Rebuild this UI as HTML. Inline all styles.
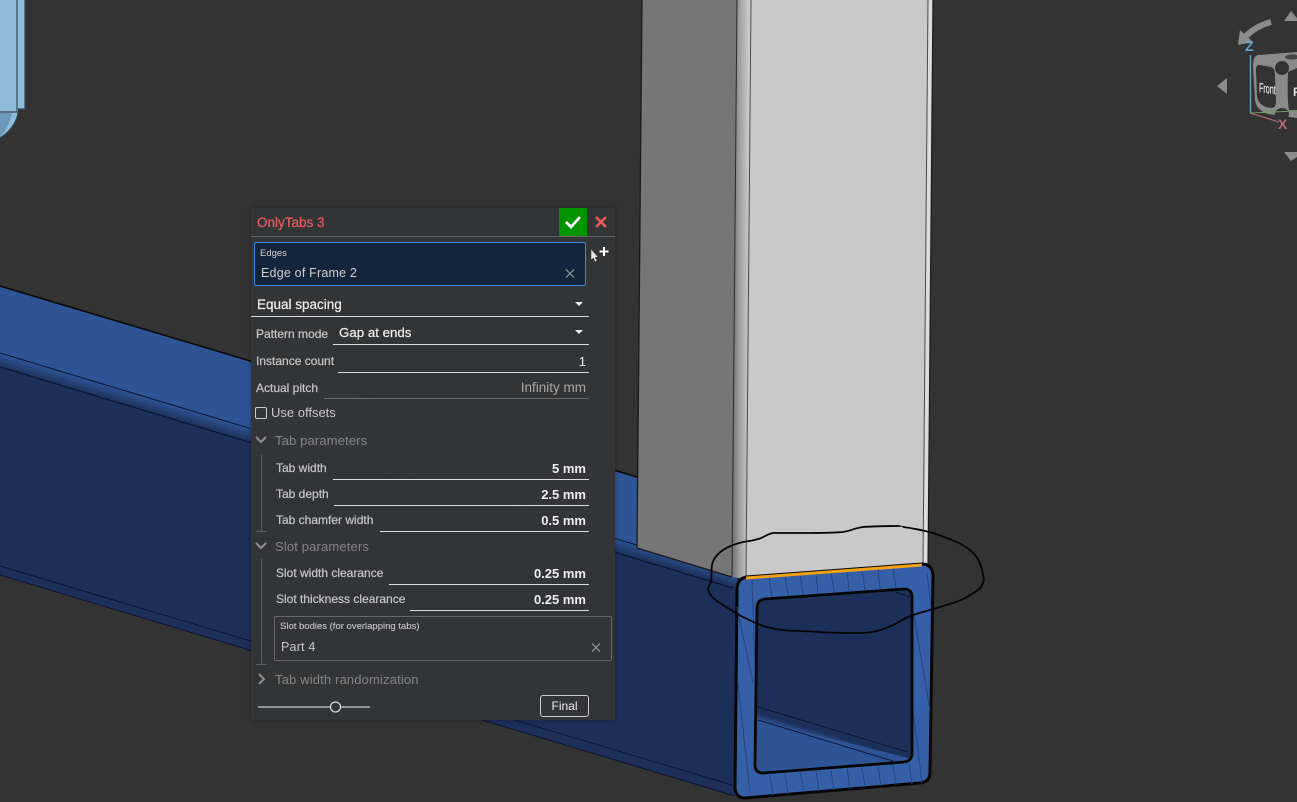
<!DOCTYPE html>
<html><head><meta charset="utf-8"><style>
html,body{margin:0;padding:0;width:1297px;height:802px;overflow:hidden;background:#333}
body{position:relative;font-family:"Liberation Sans",sans-serif;color:#ddd}
svg{position:absolute;left:0;top:0}
#p{position:absolute;left:251px;top:208px;width:364px;height:512px;background:rgba(51,52,54,.975);box-shadow:0 0 5px rgba(0,0,0,.3)}
.t{position:absolute;white-space:nowrap;font-size:12px;line-height:14px;color:#c8c8c8;transform:translateY(calc(-50% + 1px));-webkit-text-stroke:.2px #c8c8c8}
.v{position:absolute;white-space:nowrap;font-size:13px;line-height:14px;color:#eee;transform:translateY(calc(-50% + 1px));text-align:right}
.h{position:absolute;white-space:nowrap;font-size:13px;line-height:14px;color:#858585;transform:translateY(calc(-50% + 1px));letter-spacing:.15px}
.u{position:absolute;height:1px;background:#ddd}
</style></head><body>
<svg width="1297" height="802" viewBox="0 0 1297 802">
<defs>
<linearGradient id="band" gradientUnits="userSpaceOnUse" x1="100" y1="383.4" x2="96.1" y2="396.4"><stop offset="0" stop-color="#2f5496"/><stop offset="1" stop-color="#1c2f59"/></linearGradient>
<linearGradient id="rnd" x1="0" x2="1" y1="0" y2="0"><stop offset="0" stop-color="#6e6e6e"/><stop offset=".4" stop-color="#a0a0a0"/><stop offset="1" stop-color="#d4d4d4"/></linearGradient>
<linearGradient id="inb" gradientUnits="userSpaceOnUse" x1="838" y1="731" x2="834.4" y2="743"><stop offset="0" stop-color="#1c2f59"/><stop offset=".45" stop-color="#1c2f59"/><stop offset="1" stop-color="#2f5496"/></linearGradient>
</defs>
<!-- light blue part -->
<path d="M0 0H25V109H18C18 122 8 132 0 138Z" fill="#8fbcd8"/>
<path d="M17 0V112H0M25 0V109H18M18 112C17 124 8 133 0 138" fill="none" stroke="#33495a" stroke-width="1.2"/>
<path d="M0 113H12C9 125 5 132 0 137Z" fill="#6b9ab8"/>
<!-- beam -->
<path d="M0 286L740 509V797L0 575Z" fill="#1c2f59"/>
<path d="M0 286L737 508V577L0 353Z" fill="#2f5496"/>
<path d="M0 353L737 577V589L0 367Z" fill="url(#band)"/>
<path d="M0 353L640 546" stroke="#0d1530" stroke-width="1" fill="none"/>
<path d="M0 367L733 588" stroke="#0d1530" stroke-width="1.2" fill="none"/>
<path d="M0 286L637 477" stroke="#0a0a0a" stroke-width="1.6" fill="none"/>
<path d="M0 566L732 785" stroke="#0d1530" stroke-width="1" fill="none"/>
<path d="M0 575L735 796" stroke="#0d1530" stroke-width="1" fill="none"/>
<!-- column -->
<path d="M642 0H737L732 577L637 548Z" fill="#767676"/>
<path d="M737 0H751L746 579L732 577Z" fill="url(#rnd)"/>
<path d="M751 0H928L923 566L746 579Z" fill="#c9c9c9"/>
<path d="M928 0H933L928 566L923 566Z" fill="#dcdcdc"/>
<path d="M642 0L637 548L732 577" fill="none" stroke="#1a1a1a" stroke-width="1.3"/>
<path d="M737 0L732 577" stroke="#2b2b2b" stroke-width="1" fill="none"/>
<path d="M751 0L746 579" stroke="#4a4a4a" stroke-width="1" fill="none"/>
<path d="M928 0L923 566" stroke="#4a4a4a" stroke-width="1" fill="none"/>
<path d="M933 0L928 566" stroke="#1a1a1a" stroke-width="1.2" fill="none"/>
<!-- end section -->
<path d="M746 577L922 564Q932 564 933 575L930 772Q930 782 920 783L745 798Q736 798 735 788L737 590Q737 579 746 577Z" fill="#3560a8" stroke="#060606" stroke-width="3"/>
<g stroke="#25457f" stroke-width="1" fill="none">
<path d="M769 577L772 597M785 575L788 596M800 574L803 595M816 573L818 594M831 572L834 592M847 571L849 591M862 570L865 590M878 569L880 589M893 567L896 588"/>
<path d="M770 775L773 795M785 773L788 794M800 772L804 792M816 771L819 791M831 770L834 790M847 768L850 789M862 767L865 787M878 766L881 786M893 765L896 785M909 764L912 784"/>
<path d="M752 580L755 663M737 607L753 683M738 683L750 793M913 610L930 710M913 710L922 783M927 573L931 607"/>
</g>
<path d="M765 599L904 589Q912 589 912 597L912 753Q912 761 904 762L763 773Q755 773 755 765L757 608Q757 600 765 599Z" fill="#1c2f59"/>
<path d="M758 707L912 752V755Q912 761 904 762L763 773Q756 773 755 765L757 721Z" fill="#2f5496"/>
<path d="M758 707L912 752V759L757 720Z" fill="url(#inb)"/>
<path d="M758 707L908 752M758 720L893 761M895 592L910 597" stroke="#0d1530" stroke-width="1" fill="none"/>
<path d="M765 599L904 589Q912 589 912 597L912 753Q912 761 904 762L763 773Q755 773 755 765L757 608Q757 600 765 599Z" fill="none" stroke="#060606" stroke-width="2.8"/>
<path d="M746 578L922 565" stroke="#f0a010" stroke-width="3" fill="none"/>
<!-- freehand -->
<path d="M900 526C885 526 875 526 863 527C855 528 850 531 843 532C830 533 820 533 810 533C795 533 785 533 773 533C767 534 763 538 758 539C752 541 748 541 743 542C735 544 729 546 723 550C716 555 713 560 712 565C711 572 712 577 711 582C710 585 708 587 708 590C710 596 715 600 720 603C728 608 735 613 743 617C751 621 759 625 767 627C778 630 790 631 800 631C817 632 833 633 850 633C860 633 869 633 877 631C885 629 891 626 897 623C902 620 907 617 913 615C922 612 931 610 940 607C949 604 959 602 967 597C975 592 980 590 982 585C984 582 984 578 983 575C982 568 980 561 975 555C970 549 964 546 957 542C950 539 941 536 933 533C922 530 912 528 903 527" fill="none" stroke="#050505" stroke-width="1.8"/>
<path d="M900 526L933 533" fill="none" stroke="#050505" stroke-width="1"/>
<!-- view cube -->
<path d="M1284 21L1291 11L1297 18V21Z" fill="#8c8c8c"/>
<path d="M1217 86L1227 78V94Z" fill="#8c8c8c"/>
<path d="M1284 152H1297V157L1291 161Z" fill="#8c8c8c"/>
<path d="M1271 22C1260 25 1252 30 1246 36" fill="none" stroke="#8c8c8c" stroke-width="6"/>
<path d="M1238 45L1240 30L1253 42Z" fill="#8c8c8c"/>
<path d="M1258 55L1297 52V118L1268 114Q1256 110 1255 100L1253 66Q1253 56 1258 55Z" fill="#8a8a8a"/>
<path d="M1260 65L1271 67Q1275 68 1275 76L1276 102Q1276 108 1271 108L1266 107Q1258 104 1257 96L1256 70Q1256 64 1260 65Z" fill="#333"/>
<path d="M1288 72Q1297 68 1297 68V110L1289 110Q1287 100 1288 72Z" fill="#333"/>
<circle cx="1282" cy="68" r="7" fill="#333"/>
<ellipse cx="1282" cy="114" rx="7" ry="6" fill="#333"/>
<ellipse cx="1292" cy="57" rx="7" ry="2.5" fill="#444"/>
<path d="M1250.5 55V113" stroke="#6aa5cc" stroke-width="1.3" fill="none"/>
<path d="M1250 113L1279 122" stroke="#a8676c" stroke-width="1.2" fill="none"/>
<path d="M1250 113L1297 111" stroke="#6f9a62" stroke-width="1" fill="none"/>
<text x="1245" y="51" font-size="14" font-weight="bold" fill="#6aa5cc" font-family="Liberation Sans">Z</text>
<text x="1278" y="129" font-size="14" font-weight="bold" fill="#b06a70" font-family="Liberation Sans">X</text>
<text transform="translate(1259 92) skewY(8) scale(.6 1.1)" font-size="12" fill="#e6e6e6" font-family="Liberation Sans" stroke="#e6e6e6" stroke-width=".2">Front</text>
<text x="1293" y="96" font-size="12" font-weight="bold" fill="#ddd" font-family="Liberation Sans">R</text>
</svg>

<div id="p"></div>

<div class="t" style="left:257px;top:221.5px;font-size:13.5px;color:#e85a5a;-webkit-text-stroke:.25px #e85a5a">OnlyTabs 3</div>
<div style="position:absolute;left:559px;top:208px;width:28px;height:28px;background:#009400"></div>
<div style="position:absolute;left:254px;top:242px;width:330px;height:42px;background:#14243a;border:1px solid #3d8be0;border-radius:2px"></div>
<svg width="1297" height="802" viewBox="0 0 1297 802">
<path d="M566 222L571 227L580 217" fill="none" stroke="#fff" stroke-width="2.8"/>
<path d="M596 217L606 227M606 217L596 227" stroke="#e85a5a" stroke-width="2.6" fill="none"/>
<path d="M251 236.5H615" stroke="#666" stroke-width="1"/>
<path d="M566 269.5L574 277.5M574 269.5L566 277.5M592 643.5L600 651.5M600 643.5L592 651.5" stroke="#a0a0a0" stroke-width="1.1" fill="none"/>
<path d="M575 302H583L579 306Z M575 330H583L579 334Z" fill="#eee"/>
<path d="M256 437L261 442L266 437M256 543L261 548L266 543" fill="none" stroke="#8e8e8e" stroke-width="2"/>
<path d="M259 674L264 679L259 684" fill="none" stroke="#8e8e8e" stroke-width="2"/>
<path d="M261.5 455V531.5M256 531.5H267M261.5 559V664.5M256 664.5H267" stroke="#5e5e5e" stroke-width="1" fill="none"/>
<path d="M258 707H330M341 707H370" stroke="#ccc" stroke-width="1.2"/>
<circle cx="335.5" cy="707" r="5" fill="none" stroke="#ddd" stroke-width="1.2"/>
<path d="M591 249V260L593.5 258L595 262L597 261L595.3 257.5L598 257Z" fill="#e8e8e8" stroke="#222" stroke-width=".5"/>
<path d="M604 247V256M599.5 251.5H608.5" stroke="#fff" stroke-width="2"/>
</svg>

<div class="t" style="left:260px;top:253px;font-size:9.5px;color:#d0d0d0;-webkit-text-stroke:0">Edges</div>
<div class="t" style="left:261px;top:272px;font-size:12.5px;color:#d0d0d0;letter-spacing:.2px;-webkit-text-stroke:0">Edge of Frame 2</div>

<div class="v" style="left:257px;top:304px;font-size:13.5px;color:#f0f0f0;-webkit-text-stroke:.2px #f0f0f0">Equal spacing</div>
<div class="u" style="left:251px;top:316px;width:338px"></div>

<div class="t" style="left:256px;top:333px">Pattern mode</div>
<div class="v" style="left:339px;top:331.5px;font-size:13.3px;color:#f0f0f0;-webkit-text-stroke:.2px #f0f0f0">Gap at ends</div>
<div class="u" style="left:333px;top:344px;width:256px"></div>

<div class="t" style="left:256px;top:360px">Instance count</div>
<div class="v" style="right:711px;top:361px">1</div>
<div class="u" style="left:338px;top:372px;width:251px"></div>

<div class="t" style="left:256px;top:387px">Actual pitch</div>
<div class="v" style="right:711px;top:387px;color:#a8a8a8;font-size:13.5px">Infinity mm</div>
<div class="u" style="left:324px;top:398px;width:265px;background:#6a6a6a"></div>

<div style="position:absolute;left:255px;top:407px;width:10px;height:10px;border:1px solid #ccc;border-radius:2px"></div>
<div class="t" style="left:271px;top:412px;font-size:13px;-webkit-text-stroke:0">Use offsets</div>

<div class="h" style="left:275px;top:439.5px">Tab parameters</div>

<div class="t" style="left:276px;top:467px">Tab width</div>
<div class="v" style="right:711px;top:468px;font-weight:bold">5 mm</div>
<div class="u" style="left:333px;top:479px;width:256px"></div>

<div class="t" style="left:276px;top:493px">Tab depth</div>
<div class="v" style="right:711px;top:494px;font-weight:bold">2.5 mm</div>
<div class="u" style="left:334px;top:505px;width:255px"></div>

<div class="t" style="left:276px;top:519px">Tab chamfer width</div>
<div class="v" style="right:711px;top:520px;font-weight:bold">0.5 mm</div>
<div class="u" style="left:380px;top:531px;width:209px"></div>

<div class="h" style="left:275px;top:545.5px">Slot parameters</div>

<div class="t" style="left:276px;top:572px">Slot width clearance</div>
<div class="v" style="right:711px;top:573px;font-weight:bold">0.25 mm</div>
<div class="u" style="left:389px;top:584px;width:200px"></div>

<div class="t" style="left:276px;top:598px">Slot thickness clearance</div>
<div class="v" style="right:711px;top:599px;font-weight:bold">0.25 mm</div>
<div class="u" style="left:410px;top:610px;width:179px"></div>

<div style="position:absolute;left:274px;top:616px;width:336px;height:43px;border:1px solid #666;border-radius:2px"></div>
<div class="t" style="left:280px;top:626px;font-size:9.5px;color:#c8c8c8;-webkit-text-stroke:.1px #c8c8c8">Slot bodies (for overlapping tabs)</div>
<div class="t" style="left:281px;top:646px;font-size:12.5px;color:#c8c8c8;letter-spacing:.2px;-webkit-text-stroke:0">Part 4</div>

<div class="h" style="left:275px;top:678.5px">Tab width randomization</div>

<div style="position:absolute;left:540px;top:695px;width:47px;height:20px;border:1px solid #ccc;border-radius:3px;text-align:center;font-size:12px;line-height:21px;color:#f0f0f0">Final</div>
</body></html>
